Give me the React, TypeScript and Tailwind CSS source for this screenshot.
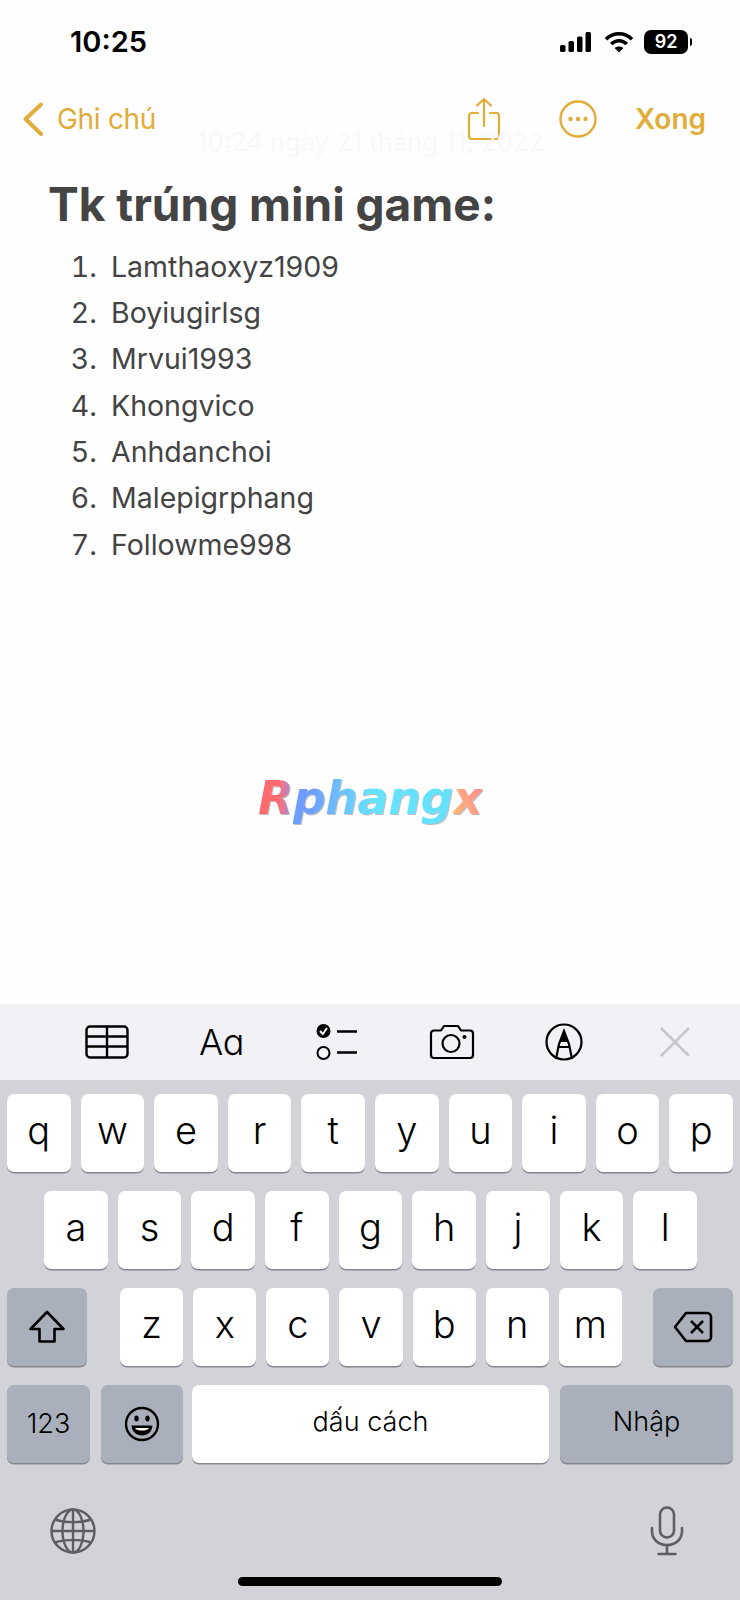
import type { ReactNode } from "react";

const names = ["Lamthaoxyz1909", "Boyiugirlsg", "Mrvui1993", "Khongvico", "Anhdanchoi", "Malepigrphang", "Followme998"];
const row1 = ["q", "w", "e", "r", "t", "y", "u", "i", "o", "p"];
const row2 = ["a", "s", "d", "f", "g", "h", "j", "k", "l"];
const row3 = ["z", "x", "c", "v", "b", "n", "m"];

function Key({ children, className }: { children: ReactNode; className: string }) {
    return (
        <div className={"h-[78px] flex items-center justify-center rounded-[7px] shadow-[0_1.5px_0_#85878c] text-black " + className}>
            {children}
        </div>
    );
}

function Letter({ label }: { label: string }) {
    return <Key className="flex-1 bg-white text-[38px] font-light pb-[5px]">{label}</Key>;
}

function StatusIcons() {
    return (
        <div className="flex items-center">
            <svg width="34" height="22" viewBox="0 0 34 22" fill="#000">
                <rect x="1" y="14" width="5.5" height="7" rx="1.6" />
                <rect x="9.5" y="10" width="5.5" height="11" rx="1.6" />
                <rect x="18" y="5.5" width="5.5" height="15.5" rx="1.6" />
                <rect x="26.5" y="1" width="5.5" height="20" rx="1.6" />
            </svg>
            <svg className="ml-[11px]" width="30" height="22" viewBox="0 0 30 22" fill="none" stroke="#000" strokeWidth="3.6">
                <path d="M2 8.2C9.5 1 20.5 1 28 8.2" />
                <path d="M7.2 13C11.8 8.6 18.2 8.6 22.8 13" />
                <path d="M15 21.5l-4.4-4.6c2.6-2 6.2-2 8.8 0z" fill="#000" stroke="none" />
            </svg>
            <div className="ml-[10px] w-[44px] h-[24px] rounded-[7px] bg-black text-white text-[18px] font-semibold flex items-center justify-center leading-none">
                92
            </div>
            <div className="ml-[2px] w-[2px] h-[8px] rounded-r-full bg-black" />
        </div>
    );
}

function Header() {
    return (
        <div className="relative h-[76px] flex items-center text-[#e0ad38]">
            <svg className="ml-[22px]" width="22" height="34" viewBox="0 0 22 34" fill="none" stroke="#e0ad38" strokeWidth="4" strokeLinecap="round" strokeLinejoin="round">
                <path d="M19 2.5L3.5 17L19 32" />
            </svg>
            <span className="ml-[13px] w-[100px] text-[28px] leading-none tracking-[-0.3px] whitespace-nowrap">Ghi chú</span>
            <svg className="ml-[310px]" width="34" height="44" viewBox="0 0 34 44" fill="none" stroke="#e0ad38" strokeWidth="2.2" strokeLinecap="round" strokeLinejoin="round">
                <path d="M11 16H4.5a2.5 2.5 0 0 0-2.5 2.5v21a2.5 2.5 0 0 0 2.5 2.5h25a2.5 2.5 0 0 0 2.5-2.5v-21a2.5 2.5 0 0 0-2.5-2.5H23" />
                <path d="M17 29V2M10 8.500L17 2l7 6.500" />
            </svg>
            <svg className="ml-[58px]" width="38" height="38" viewBox="0 0 38 38" fill="none">
                <circle cx="19" cy="19" r="17.5" stroke="#e0ad38" strokeWidth="2.4" />
                <circle cx="11.5" cy="19" r="2.2" fill="#e0ad38" />
                <circle cx="19" cy="19" r="2.2" fill="#e0ad38" />
                <circle cx="26.5" cy="19" r="2.2" fill="#e0ad38" />
            </svg>
            <span className="ml-[38px] text-[28px] leading-none font-semibold">Xong</span>
            <span className="absolute left-[197px] top-[43px] text-[25.6px] leading-[36px] text-[#f8f8f8] whitespace-nowrap">10:24 ngày 21 tháng 11, 2022</span>
        </div>
    );
}

function Logo() {
    return (
        <div className="flex justify-center font-['DejaVu_Sans',sans-serif] font-bold italic text-[46px] leading-[60px] tracking-[-0.5px] drop-shadow-[1px_1px_0.5px_rgba(0,0,0,0.25)]">
            <span className="bg-gradient-to-r from-[#ff6b6f] from-60% to-[#9a86e8] bg-clip-text text-transparent">R</span>
            <span className="bg-gradient-to-r from-[#6f9dff] from-10% to-[#66e2ff] to-50% bg-clip-text text-transparent">phang</span>
            <span className="bg-gradient-to-bl from-[#ff7f90] to-[#ffc070] bg-clip-text text-transparent">x</span>
        </div>
    );
}

function Toolbar() {
    return (
        <div className="h-[76px] bg-[#f1f1f6] grid grid-cols-6 pl-[50px] pr-[6px] items-center justify-items-center">
            <svg width="44" height="34" viewBox="0 0 44 34" fill="none" stroke="#000" strokeWidth="2.4">
                <rect x="1.5" y="1.5" width="41" height="31" rx="3.5" />
                <path d="M1.5 11.5H42.5M1.5 21.5H42.5M22 1.5V32.5" />
            </svg>
            <span className="ml-[1px] text-[36px] leading-none font-light text-black tracking-[-0.5px]">Aɑ</span>
            <svg className="ml-[3px]" width="42" height="38" viewBox="0 0 42 38" fill="none">
                <circle cx="7.5" cy="8" r="7" fill="#000" />
                <path d="M4 8l2.8 3L11 5" stroke="#fff" strokeWidth="2" />
                <circle cx="7.5" cy="30" r="6" stroke="#000" strokeWidth="2" />
                <path d="M21 8.5H41M21 29.5H41" stroke="#000" strokeWidth="2.4" />
            </svg>
            <svg className="ml-[6px]" width="46" height="36" viewBox="0 0 46 36" fill="none" stroke="#000" strokeWidth="2.2" strokeLinejoin="round">
                <path d="M5 6.5h7l3-4.5h14l3 4.500h9a3 3 0 0 1 3 3V31a3 3 0 0 1-3 3H5a3 3 0 0 1-3-3V9.500a3 3 0 0 1 3-3z" />
                <circle cx="22" cy="19.500" r="8.500" />
                <circle cx="35.500" cy="13" r="2" fill="#000" stroke="none" />
            </svg>
            <svg className="ml-[2px]" width="38" height="38" viewBox="0 0 38 38" fill="none" stroke="#000" strokeWidth="2.2">
                <circle cx="19" cy="19" r="17.500" />
                <path d="M11 36l3-15 5-13 5 13 3 15M14 24h10" />
                <path d="M19 8l-3.500 11h7z" fill="#000" stroke="none" />
            </svg>
            <svg className="mr-[4px]" width="32" height="32" viewBox="0 0 32 32" fill="none" stroke="#c7c7cb" strokeWidth="2.600">
                <path d="M2 2L30 30M30 2L2 30" />
            </svg>
        </div>
    );
}

function Keyboard() {
    return (
        <div className="bg-[#d1d3d9] h-[520px] pt-[14px] flex flex-col">
            <div className="flex flex-col gap-[19px] px-[7px]">
                <div className="flex gap-[10px]">
                    {row1.map((k) => <Letter key={k} label={k} />)}
                </div>
                <div className="flex gap-[10px] pl-[37px] pr-[36px]">
                    {row2.map((k) => <Letter key={k} label={k} />)}
                </div>
                <div className="flex">
                    <Key className="w-[80px] bg-[#aab0bb]">
                        <svg width="38" height="34" viewBox="0 0 38 34" fill="none" stroke="#000" strokeWidth="2.600" strokeLinejoin="round">
                            <path d="M19 2L2.500 19H11.500V31.500H26.500V19H35.500z" />
                        </svg>
                    </Key>
                    <div className="flex flex-1 gap-[10px] pl-[33px] pr-[31px]">
                        {row3.map((k) => <Letter key={k} label={k} />)}
                    </div>
                    <Key className="w-[80px] bg-[#aab0bb]">
                        <svg width="40" height="32" viewBox="0 0 40 32" fill="none" stroke="#000" strokeWidth="2.600" strokeLinejoin="round">
                            <path d="M13 2H34a4 4 0 0 1 4 4V26a4 4 0 0 1-4 4H13L2 16z" />
                            <path d="M18 10L30 22M30 10L18 22" />
                        </svg>
                    </Key>
                </div>
                <div className="flex">
                    <Key className="w-[83px] bg-[#aab0bb] text-[27px] font-light">123</Key>
                    <Key className="ml-[11px] w-[82px] bg-[#aab0bb]">
                        <svg width="36" height="36" viewBox="0 0 36 36" fill="none">
                            <circle cx="18" cy="18" r="16" stroke="#000" strokeWidth="2.400" />
                            <ellipse cx="12.500" cy="12.500" rx="2.200" ry="3" fill="#000" />
                            <ellipse cx="23.500" cy="12.500" rx="2.200" ry="3" fill="#000" />
                            <path d="M7.500 19.500H28.500C28 26 23.500 29.500 18 29.500S8 26 7.500 19.500z" fill="#000" />
                            <path d="M11 22H25C24 24 21 24.500 18 24.500S12 24 11 22z" fill="#fff" />
                        </svg>
                    </Key>
                    <Key className="ml-[9px] w-[357px] bg-white text-[27px] font-light pb-[4px]">dấu cách</Key>
                    <Key className="ml-[11px] flex-1 bg-[#aab0bb] text-[27px] font-light pb-[4px]">Nhập</Key>
                </div>
            </div>
            <div className="flex justify-between items-center pl-[50px] pr-[56px] mt-[43px] pb-[2px]">
                <svg width="46" height="46" viewBox="0 0 46 46" fill="none" stroke="#5c5e63" strokeWidth="2.400">
                    <circle cx="23" cy="23" r="21.500" />
                    <ellipse cx="23" cy="23" rx="10.500" ry="21.500" />
                    <path d="M23 1.500V44.500M1.500 23H44.500M5 11.500C15 15 31 15 41 11.500M5 34.500C15 31 31 31 41 34.500" />
                </svg>
                <svg width="34" height="50" viewBox="0 0 34 50" fill="none" stroke="#5c5e63" strokeWidth="2.600" strokeLinecap="round">
                    <rect x="10" y="1.500" width="14" height="30" rx="7" />
                    <path d="M2 22v3c0 8.500 6.500 14 15 14s15-5.500 15-14v-3M17 39v8.500M8.500 48h17" />
                </svg>
            </div>
            <div className="mt-[19px] mx-auto w-[264px] h-[9px] rounded-full bg-black" />
        </div>
    );
}

export default function App() {
    return (
        <div className="w-[740px] h-[1600px] bg-[#fefefe] flex flex-col overflow-hidden font-['Inter','Noto_Sans',sans-serif]">
            {/* status bar */}
            <div className="h-[81px] pt-[26px] pl-[70px] pr-[48px] flex justify-between items-start">
                <span className="text-[29px] leading-[32px] font-semibold text-black">10:25</span>
                <div className="pt-[4px]"><StatusIcons /></div>
            </div>
            <Header />

            {/* note */}
            <div className="flex-1 flex flex-col text-[#444444]">
                <h1 className="ml-[48px] mt-[21px] text-[46px] leading-[52px] font-bold">Tk trúng mini game:</h1>
                <ol className="mt-[14px] flex flex-col">
                    {names.map((name, i) => (
                        <li key={name} className="flex h-[46.3px] items-center text-[28.5px]">
                            <span className="w-[111px] pr-[14px] text-right tabular-nums">{i + 1}.</span>
                            <span>{name}</span>
                        </li>
                    ))}
                </ol>
                <div className="mt-[200px]"><Logo /></div>
            </div>

            <Toolbar />
            <Keyboard />
        </div>
    );
}
